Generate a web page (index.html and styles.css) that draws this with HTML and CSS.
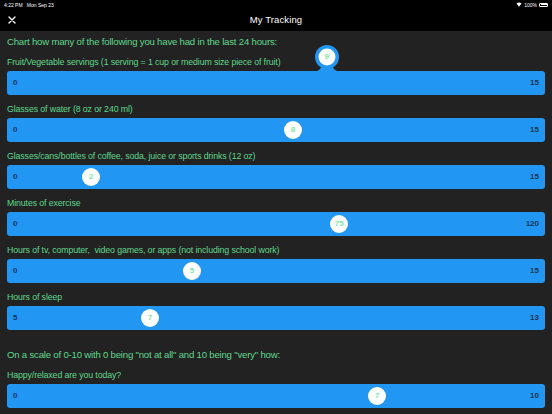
FILE: index.html
```html
<!DOCTYPE html>
<html>
<head>
<meta charset="utf-8">
<link rel="stylesheet" href="styles.css">
</head>
<body>
<div class="status">
  <span class="time">4:22 PM&nbsp;&nbsp;&nbsp;Mon Sep 23</span>
  <span class="sys">
    <svg class="wifi" width="6" height="5" viewBox="0 0 12 10"><path d="M6 9.5 L1 3.2 A8 8 0 0 1 11 3.2 Z" fill="#fff"/></svg>
    <span class="pct">100%</span>
    <span class="battery"><span class="fill"></span></span>
  </span>
</div>
<header class="nav">
  <svg class="close" width="8" height="8" viewBox="0 0 8 8"><path d="M1 1 L7 7 M7 1 L1 7" stroke="#fff" stroke-width="1.3" stroke-linecap="round"/></svg>
  <div class="title">My Tracking</div>
</header>
<main class="content">
  <h1 class="heading">Chart how many of the following you have had in the last 24 hours:</h1>

  <section class="item">
    <div class="label">Fruit/Vegetable servings (1 serving = 1 cup or medium size piece of fruit)</div>
    <div class="slider">
      <span class="num">0</span><span class="num">15</span>
      <div class="bubble" style="left:319.7px">
        <svg width="30" height="27" viewBox="0 0 30 27"><circle cx="15" cy="12" r="12" fill="#2196f3"/><path d="M0 27 Q 9 27 9.5 20 L 20.5 20 Q 21 27 30 27 Z" fill="#2196f3"/><circle cx="15" cy="12" r="8.5" fill="#fff"/></svg>
        <span class="bval">9</span>
      </div>
    </div>
  </section>

  <section class="item">
    <div class="label">Glasses of water (8 oz or 240 ml)</div>
    <div class="slider">
      <span class="num">0</span><span class="num">15</span>
      <div class="thumb" style="left:286px">8</div>
    </div>
  </section>

  <section class="item">
    <div class="label">Glasses/cans/bottles of coffee, soda, juice or sports drinks (12 oz)</div>
    <div class="slider">
      <span class="num">0</span><span class="num">15</span>
      <div class="thumb" style="left:84px">2</div>
    </div>
  </section>

  <section class="item">
    <div class="label">Minutes of exercise</div>
    <div class="slider">
      <span class="num">0</span><span class="num">120</span>
      <div class="thumb" style="left:332.3px">75</div>
    </div>
  </section>

  <section class="item">
    <div class="label">Hours of tv, computer,&nbsp; video games, or apps (not including school work)</div>
    <div class="slider">
      <span class="num">0</span><span class="num">15</span>
      <div class="thumb" style="left:185px">5</div>
    </div>
  </section>

  <section class="item">
    <div class="label">Hours of sleep</div>
    <div class="slider">
      <span class="num">5</span><span class="num">13</span>
      <div class="thumb" style="left:143px">7</div>
    </div>
  </section>

  <h1 class="heading second">On a scale of 0-10 with 0 being "not at all" and 10 being "very" how:</h1>

  <section class="item">
    <div class="label">Happy/relaxed are you today?</div>
    <div class="slider">
      <span class="num">0</span><span class="num">10</span>
      <div class="thumb" style="left:370.2px">7</div>
    </div>
  </section>
</main>
</body>
</html>
```
FILE: styles.css
```css
* { box-sizing: border-box; }
html, body {
  margin: 0;
  padding: 0;
  background: #222222;
  overflow: hidden;
  font-family: "Liberation Sans", Arial, sans-serif;
}
.status {
  height: 8px;
  background: #000;
  color: #fff;
  font-size: 5px;
  display: flex;
  justify-content: space-between;
  align-items: center;
  padding: 1px 4px 0 4px;
}
.sys {
  display: flex;
  align-items: center;
  gap: 2px;
}
.battery {
  width: 9px;
  height: 4px;
  border: 0.6px solid #fff;
  border-radius: 1px;
  padding: 0.5px;
  display: flex;
}
.battery .fill {
  flex: 1;
  background: #fff;
}
.nav {
  height: 23px;
  background: #000;
  display: flex;
  align-items: center;
  justify-content: center;
  position: relative;
}
.close {
  position: absolute;
  left: 8px;
  top: 8px;
}
.title {
  color: #fff;
  font-size: 9.5px;
  font-weight: normal;
  letter-spacing: 0.1px;
}
.content {
  padding: 4px 7px 0 7px;
}
.heading {
  margin: 0 0 6.5px 0;
  font-size: 9.6px;
  letter-spacing: -0.2px;
  line-height: 14px;
  font-weight: normal;
  color: #5fd88d;
}
.heading.second {
  margin-top: 18.5px;
}
.item {
  margin-bottom: 8px;
}
.label {
  font-size: 8.8px;
  letter-spacing: -0.12px;
  line-height: 13px;
  height: 13px;
  color: #5fd88d;
  margin-bottom: 2px;
  white-space: nowrap;
}
.slider {
  position: relative;
  height: 24px;
  background: #2196f3;
  border-radius: 3px;
  display: flex;
  align-items: center;
  justify-content: space-between;
  padding: 0 6px;
}
.num {
  font-size: 8px;
  font-weight: 600;
  color: #183556;
}
.thumb {
  position: absolute;
  top: 50%;
  width: 18px;
  height: 18px;
  margin-left: -9px;
  margin-top: -9px;
  border-radius: 50%;
  background: #fff;
  color: #7ee8a6;
  font-size: 8px;
  font-weight: 600;
  display: flex;
  align-items: center;
  justify-content: center;
}
.bubble {
  position: absolute;
  bottom: 100%;
  width: 30px;
  height: 27px;
  margin-left: -15px;
  margin-bottom: -1px;
}
.bubble svg {
  display: block;
}
.bval {
  position: absolute;
  left: 0;
  right: 0;
  top: 0;
  height: 24px;
  display: flex;
  align-items: center;
  justify-content: center;
  color: #7ee8a6;
  font-size: 8px;
  font-weight: 600;
}
```
